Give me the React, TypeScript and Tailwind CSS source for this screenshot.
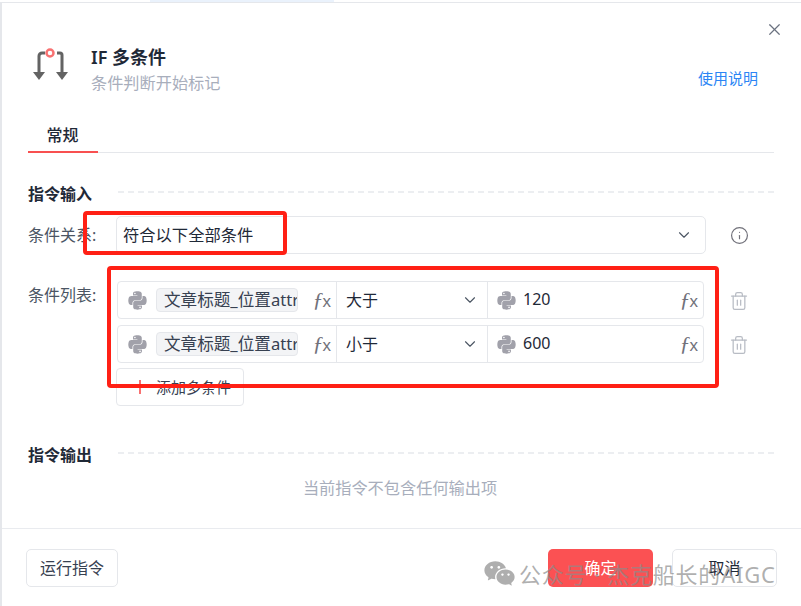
import { ChevronDown, Info, Trash2, X } from 'lucide-react'
import { FaPython } from 'react-icons/fa'
import { RiWechatFill } from 'react-icons/ri'

function Fx() {
  return (
    <span className="flex items-baseline text-[#71717a] leading-none select-none">
      <span className="text-[22px] italic font-['Liberation_Serif',serif]">ƒ</span>
      <span className="text-[17px] -ml-[1px] font-['Liberation_Sans',sans-serif]">x</span>
    </span>
  )
}

function ConditionRow({ op, value }: { op: string; value: string }) {
  return (
    <div className="flex h-[38px] border border-[#e5e7eb] rounded-[4px] bg-white">
      <div className="w-[219px] flex items-center pl-[9px] pr-[5px] border-r border-[#e5e7eb]">
        <FaPython className="w-[21px] h-[21px] text-[#a1a1aa] shrink-0" />
        <div className="ml-[8px] w-[142px] h-[24px] pl-[7px] pr-[2px] flex items-center bg-[#f3f4f6] border border-[#e5e7eb] rounded-[4px] overflow-hidden whitespace-nowrap text-[16.6px] text-[#374151]">
          文章标题_位置attr
        </div>
        <div className="ml-auto"><Fx /></div>
      </div>
      <div className="w-[151px] flex items-center justify-between pl-[9px] pr-[8px] border-r border-[#e5e7eb] text-[16px] text-[#1f2937]">
        <span>{op}</span>
        <ChevronDown className="w-[18px] h-[18px] text-[#4b5563]" strokeWidth={1.5} />
      </div>
      <div className="flex-1 flex items-center pl-[8px] pr-[5px] text-[16px] text-[#1f2937]">
        <FaPython className="w-[21px] h-[21px] text-[#a1a1aa] shrink-0" />
        <span className="ml-[6px] -mt-[3px]">{value}</span>
        <div className="ml-auto"><Fx /></div>
      </div>
    </div>
  )
}

function SectionTitle({ title }: { title: string }) {
  return (
    <div className="flex items-center">
      <div className="w-[90px] text-[16px] font-semibold text-[#1f2937] leading-[22px]">{title}</div>
      <div className="flex-1 border-t-2 border-dashed border-[#eceef1] -mt-[4px]"></div>
    </div>
  )
}

export default function App() {
  return (
    <div className="relative w-[801px] h-[606px] overflow-hidden bg-white font-['Noto_Sans','Noto_Sans_CJK_SC',sans-serif]">
      {/* page behind the dialog */}
      <div className="h-[2px] pl-[150px]">
        <div className="w-[184px] h-[2px] bg-[#eaf2fc]"></div>
      </div>

      <div className="h-[604px] border-t border-l-2 border-[#e5e7eb] flex flex-col">
        <div className="flex-1 pl-[26px] pr-[27px] relative">
          <button className="absolute right-[17px] top-[17px] text-[#6b7280]">
            <X className="w-[19px] h-[19px]" strokeWidth={1.5} />
          </button>

          <div className="flex pt-[40px] h-[124px]">
            <svg className="w-[44px] h-[40px] mt-[2px] ml-[1px]" viewBox="0 0 44 40" fill="none">
              <path d="M10 29V11a3 3 0 0 1 3-3h3" stroke="#636363" strokeWidth="3" />
              <path d="M28 8h3a2 2 0 0 1 2 2v19" stroke="#636363" strokeWidth="3" />
              <path d="M4 27h12l-6 8zM27 27h12l-6 8z" fill="#636363" />
              <circle cx="21" cy="8" r="3.5" stroke="#f87171" strokeWidth="2.5" />
            </svg>
            <div className="ml-[18px]">
              <div className="text-[18px] font-semibold leading-[24px] text-[#1f2937] mt-[2px]">IF 多条件</div>
              <div className="text-[16.2px] leading-[24px] text-[#a8aebc] mt-[2px]">条件判断开始标记</div>
            </div>
            <a className="ml-auto mr-[16px] mt-[25px] text-[15px] leading-[20px] text-[#2b85f5]">使用说明</a>
          </div>

          <div className="border-b border-[#e5e7eb] h-[26px]">
            <div className="w-[70px] h-[26px] text-center border-b-2 border-[#f85050] text-[16px] font-medium leading-[16px] text-[#1f2937] pr-[1px]">
              常规
            </div>
          </div>

          <div className="mt-[30px]">
            <SectionTitle title="指令输入" />
          </div>

          <div className="flex mt-[11px] items-center">
            <div className="w-[88px] text-[16px] text-[#4b5563] whitespace-nowrap">条件关系:</div>
            <div className="w-[590px] h-[38px] border border-[#e5e7eb] rounded-[5px] flex items-center justify-between pl-[6px] pr-[12px] text-[16.3px] text-[#1f2937]">
              <span>符合以下全部条件</span>
              <ChevronDown className="w-[18px] h-[18px] text-[#4b5563]" strokeWidth={1.5} />
            </div>
            <Info className="w-[19px] h-[19px] ml-[24px] text-[#71717a]" strokeWidth={1.5} />
          </div>

          <div className="flex mt-[27px]">
            <div className="w-[89px] text-[16px] text-[#4b5563] whitespace-nowrap leading-[24px] mt-[2px]">条件列表:</div>
            <div className="w-[587px]">
              <div className="flex flex-col gap-[6px]">
                <ConditionRow op="大于" value="120" />
                <ConditionRow op="小于" value="600" />
              </div>
              <button className="flex items-center w-[128px] h-[38px] mt-[5px] -ml-[1px] border border-[#e5e7eb] rounded-[4px] text-[15px] text-[#374151] bg-white">
                <span className="w-[2px] h-[14px] bg-[#f87171] ml-[22px]"></span>
                <span className="ml-[15px]">添加多条件</span>
              </button>
            </div>
            <div className="flex flex-col gap-[24px] ml-[25px] pt-[10px]">
              <Trash2 className="w-[20px] h-[20px] text-[#b8bcc4]" strokeWidth={1.5} />
              <Trash2 className="w-[20px] h-[20px] text-[#b8bcc4]" strokeWidth={1.5} />
            </div>
          </div>

          <div className="mt-[38px]">
            <SectionTitle title="指令输出" />
          </div>
          <div className="mt-[11px] text-center text-[16.2px] leading-[22px] text-[#a8aebc] pr-[2px]">当前指令不包含任何输出项</div>
        </div>

        <div className="h-[78px] border-t border-[#e9ebef] flex items-start pt-[20px] pl-[24px] pr-[24px]">
          <button className="w-[92px] h-[38px] border border-[#e5e7eb] rounded-[5px] text-[16px] text-[#374151]">运行指令</button>
          <button className="ml-auto w-[105px] h-[38px] rounded-[5px] bg-[#fb5153] text-[16px] text-white">确定</button>
          <button className="ml-[19px] w-[105px] h-[38px] border border-[#e5e7eb] rounded-[5px] text-[16px] text-[#1f2937]">取消</button>
        </div>
      </div>

      {/* red annotation boxes drawn over the screenshot */}
      <div className="absolute left-[83px] top-[211px] w-[204px] h-[44px] border-[4px] border-[#ff2015] rounded-[4px]"></div>
      <div className="absolute left-[107px] top-[266px] w-[612px] h-[122px] border-[4px] border-[#ff2015] rounded-[4px]"></div>

      {/* watermark */}
      <div className="absolute left-[483px] top-[557px] flex items-center text-[#8c8c8c]/70 pointer-events-none whitespace-nowrap">
        <RiWechatFill className="w-[33px] h-[33px]" />
        <span className="ml-[3px] text-[22px] leading-[30px] tracking-[0.8px]">公众号 · 杰克船长的AIGC</span>
      </div>
    </div>
  )
}
